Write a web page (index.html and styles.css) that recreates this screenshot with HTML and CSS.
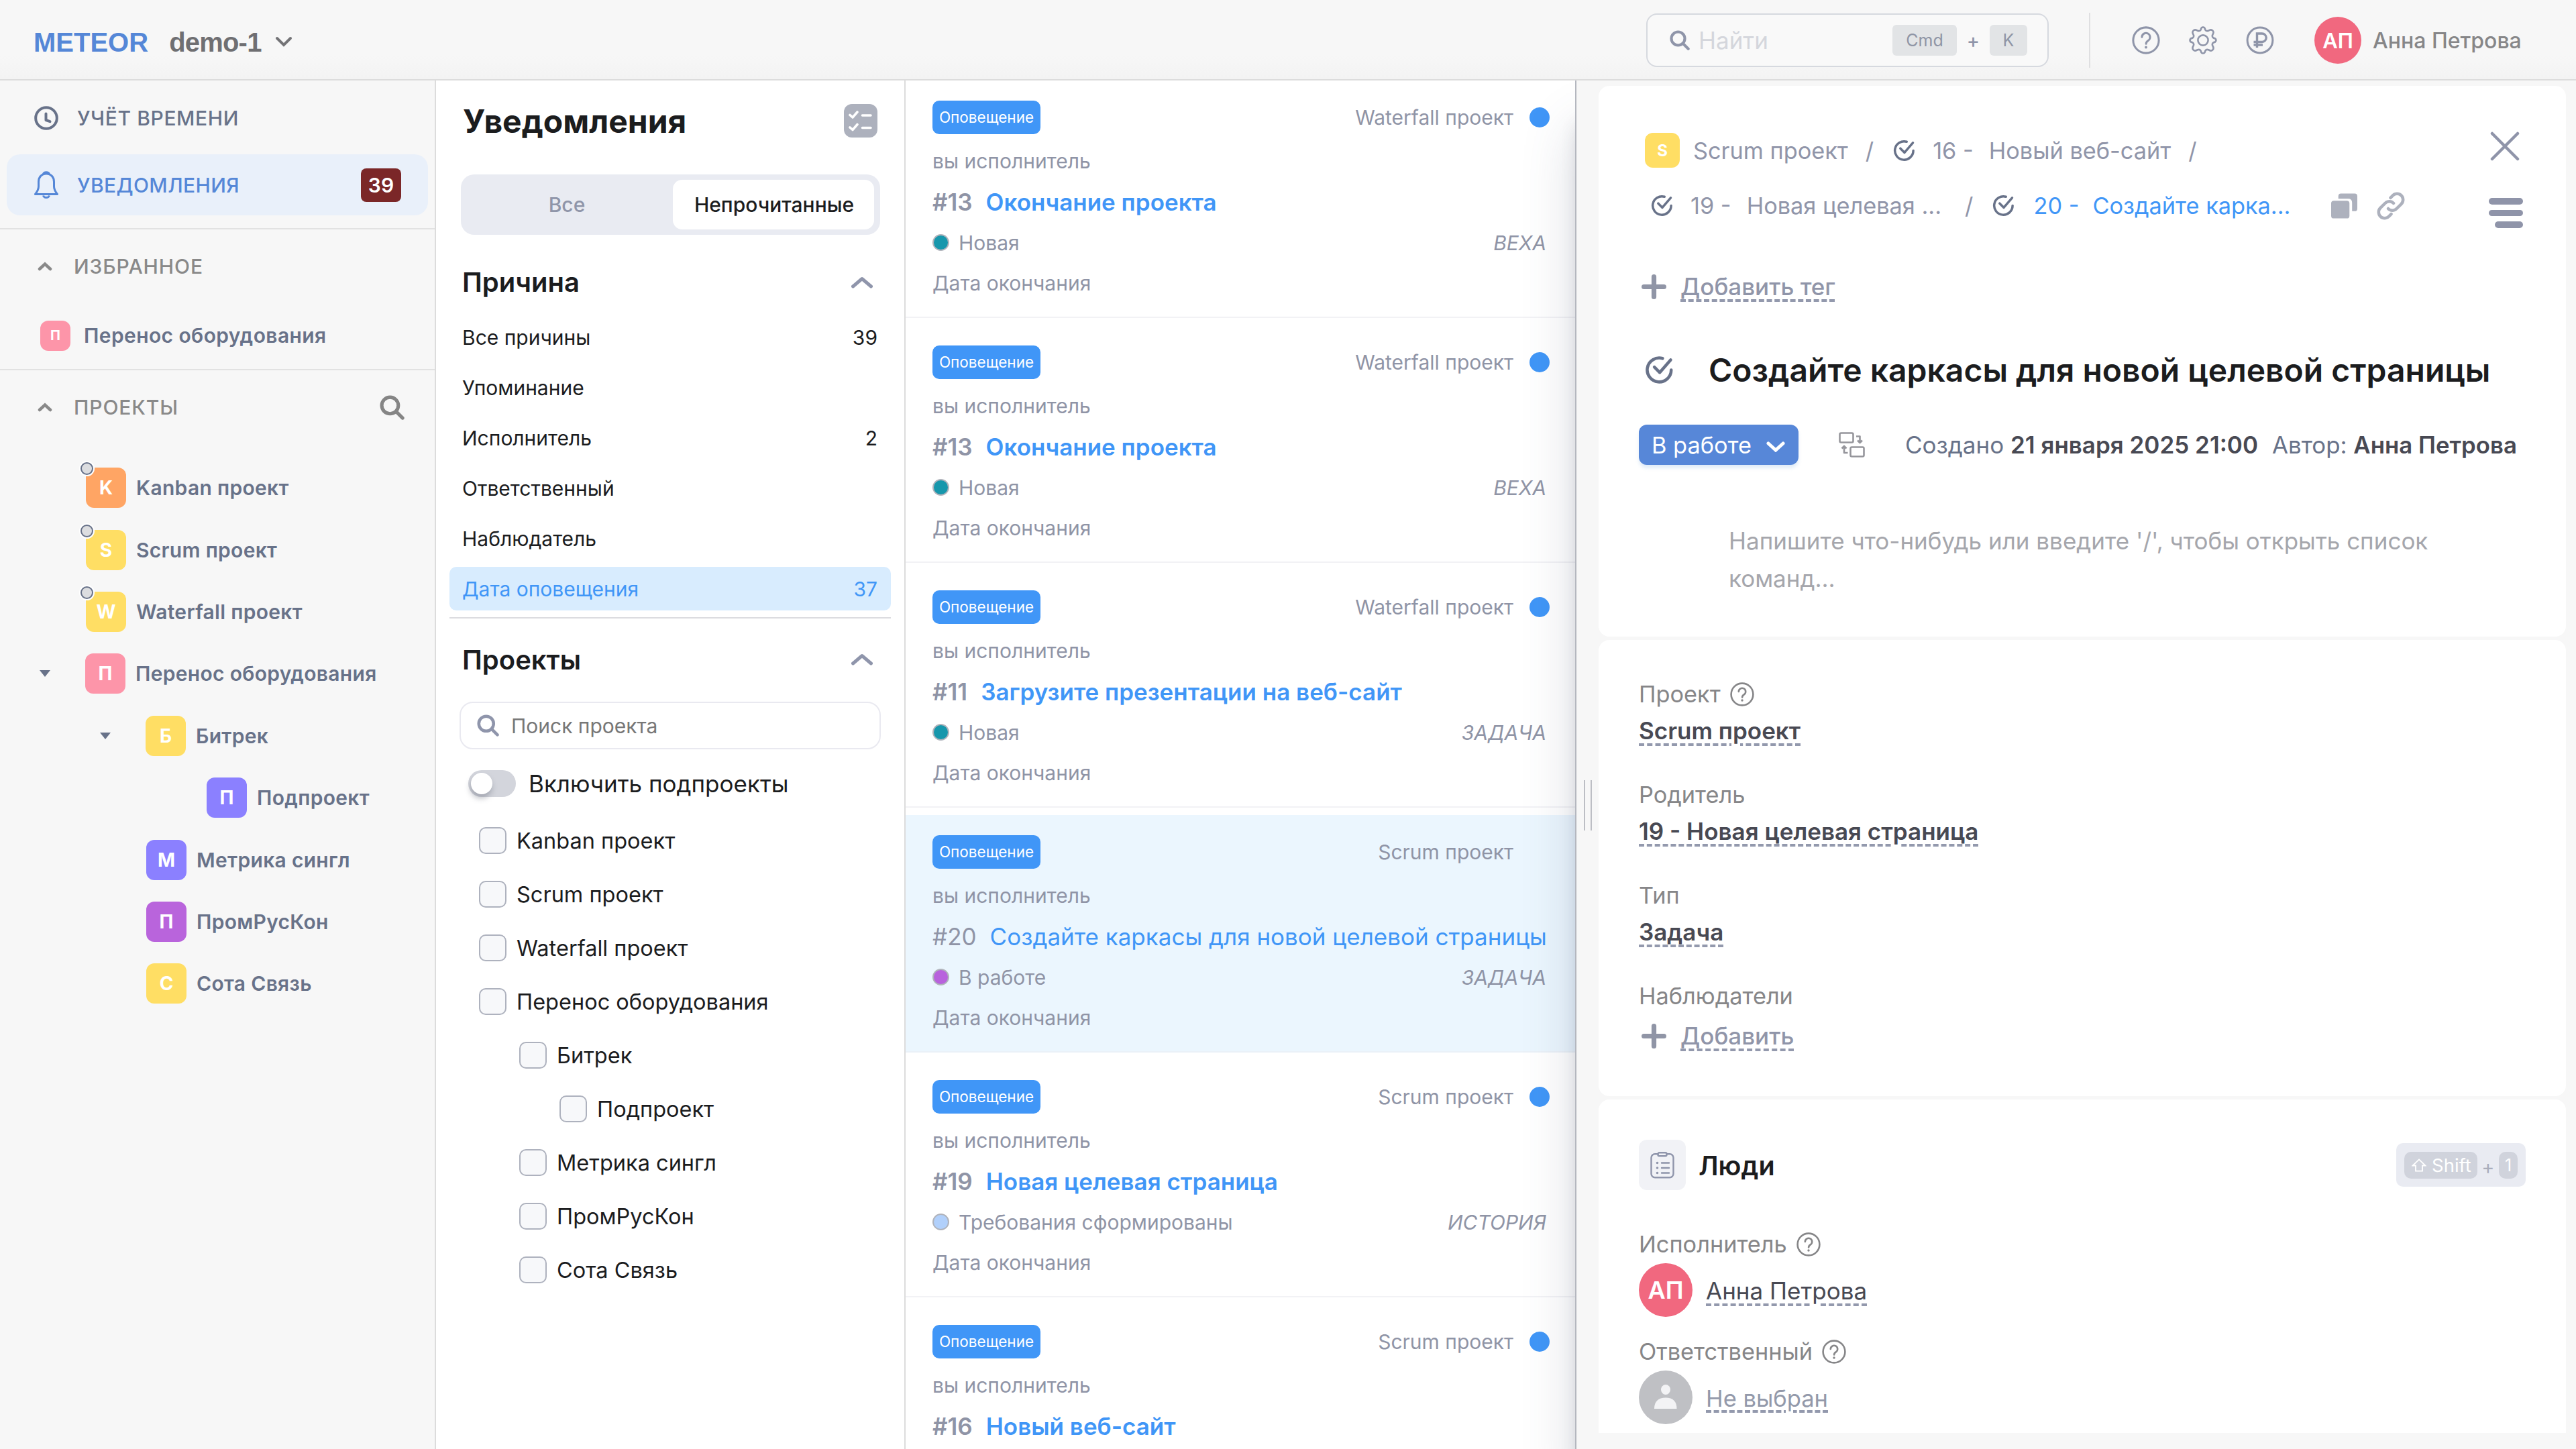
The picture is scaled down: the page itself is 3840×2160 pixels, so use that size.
FILE: index.html
```html
<!DOCTYPE html>
<html lang="ru">
<head>
<meta charset="utf-8">
<title>Уведомления — METEOR</title>
<link rel="stylesheet" href="styles.css">
</head>
<body>
<svg class="sprite" aria-hidden="true">
  <symbol id="i-task" viewBox="0 0 32 32"><g fill="none" stroke="currentColor" stroke-width="3.4" stroke-linecap="round" stroke-linejoin="round"><path d="M19.6 3.2A13.3 13.3 0 1 0 29.2 16"/><path d="M10.5 12.8l6 6L28.6 4.8"/></g></symbol>
  <symbol id="i-help" viewBox="0 0 36 36"><g fill="none" stroke="currentColor" stroke-width="2.6" stroke-linecap="round"><circle cx="18" cy="18" r="16.4"/><path d="M12.8 14a5.2 5.2 0 1 1 8 4.4c-1.9 1.2-2.7 2.1-2.7 4.1"/></g><circle cx="18" cy="27" r="1.7" fill="currentColor"/></symbol>
  <symbol id="i-search" viewBox="0 0 36 36"><g fill="none" stroke="currentColor" stroke-width="5" stroke-linecap="round"><circle cx="15" cy="15" r="12"/><path d="M24.2 24.2l9 9"/></g></symbol>
  <symbol id="i-up" viewBox="0 0 32 18"><path d="M2.5 15L16 3.5 29.5 15" fill="none" stroke="currentColor" stroke-width="5" stroke-linecap="round" stroke-linejoin="round"/></symbol>
  <symbol id="i-plus" viewBox="0 0 36 36"><path d="M18 3.5v29M3.5 18h29" stroke="currentColor" stroke-width="7" stroke-linecap="round"/></symbol>
</svg>

<header class="topbar">
  <div class="brand">METEOR</div>
  <div class="workspace">demo-1</div>
  <svg class="workspace-caret" viewBox="0 0 26 16"><path d="M3 3l10 10L23 3" fill="none" stroke="currentColor" stroke-width="4" stroke-linecap="round"/></svg>
  <div class="search">
    <svg class="search-icon"><use href="#i-search"/></svg>
    <span class="search-text">Найти</span>
    <kbd class="key key-cmd">Cmd</kbd><span class="key-plus">+</span><kbd class="key key-k">K</kbd>
  </div>
  <div class="topbar-sep"></div>
  <svg class="top-icon"><use href="#i-help"/></svg>
  <svg class="top-icon gear" viewBox="0 0 42 42"><g fill="none" stroke="currentColor" stroke-width="2.6" stroke-linejoin="round"><circle cx="21" cy="21" r="7.6"/><path d="M17.6 5.6Q18.2 1.5 21 1.5T24.4 5.6Q26 8 29 6.8Q33 4.2 35.4 6.6T35.2 13Q34 16 36.6 17.6Q40.5 18.2 40.5 21T36.6 24.4Q34 26 35.2 29Q37.800 33 35.400 35.400T29 35.200Q26 34 24.400 36.600Q23.800 40.500 21 40.500T17.600 36.600Q16 34 13 35.200Q9 37.800 6.600 35.400T6.800 29Q8 26 5.400 24.400Q1.500 23.800 1.500 21T5.400 17.600Q8 16 6.800 13Q4.200 9 6.600 6.600T13 6.800Q16 8 17.600 5.600Z"/></g></svg>
  <svg class="top-icon ruble" viewBox="0 0 42 42"><g fill="none" stroke="currentColor" stroke-width="3"><circle cx="21" cy="21" r="18.900"/><path d="M16.500 32V11h7.500a6 6 0 0 1 0 12.500H11.500M11.500 28H25" stroke-width="3.400"/></g></svg>
  <div class="avatar avatar-top">АП</div>
  <div class="user-name">Анна Петрова</div>
</header>

<div class="layout">
  <nav class="sidebar">
    <div class="nav-group">
      <a class="nav-item"><svg class="nav-icon" viewBox="0 0 36 36"><g fill="none" stroke="currentColor" stroke-width="4"><circle cx="18" cy="18" r="15.800"/><path d="M17.500 11.500v9.500l6 2.200" stroke-linecap="round" stroke-linejoin="round"/></g></svg><span>УЧЁТ ВРЕМЕНИ</span></a>
      <a class="nav-item active"><svg class="nav-icon bell" viewBox="0 0 36 42"><g fill="none" stroke="currentColor" stroke-width="3" stroke-linejoin="round"><path d="M18 4C11 4 6.500 9 6.500 16v7c0 4-1.500 7-5 11.500h33C31 30 29.500 27 29.500 23v-7C29.500 9 25 4 18 4z"/><path d="M13.500 4.500a4.600 3.600 0 0 1 9 0M13.500 36.500a4.600 3.800 0 0 0 9 0"/></g></svg><span class="nav-active-text">УВЕДОМЛЕНИЯ</span><b class="counter">39</b></a>
    </div>
    <div class="fav-group">
      <div class="side-head"><svg class="side-chev" viewBox="0 0 22 14"><path d="M3 11l8-7.500 8 7.500" fill="none" stroke="currentColor" stroke-width="4.500" stroke-linecap="round"/></svg>ИЗБРАННОЕ</div>
      <div class="fav"><i class="tile tile-s pink">П</i><span>Перенос оборудования</span></div>
    </div>
    <div class="side-head projects-head"><svg class="side-chev" viewBox="0 0 22 14"><path d="M3 11l8-7.500 8 7.500" fill="none" stroke="currentColor" stroke-width="4.500" stroke-linecap="round"/></svg>ПРОЕКТЫ<svg class="side-search"><use href="#i-search"/></svg></div>
    <ul class="tree">
      <li class="node"><i class="tile orange dot">K</i>Kanban проект</li>
      <li class="node"><i class="tile yellow dot">S</i>Scrum проект</li>
      <li class="node"><i class="tile yellow dot">W</i>Waterfall проект</li>
      <li class="node open"><i class="tile pink">П</i>Перенос оборудования</li>
      <li class="node l2 open"><i class="tile yellow">Б</i>Битрек</li>
      <li class="node l3"><i class="tile violet">П</i>Подпроект</li>
      <li class="node l2"><i class="tile violet">М</i>Метрика сингл</li>
      <li class="node l2"><i class="tile purple">П</i>ПромРусКон</li>
      <li class="node l2"><i class="tile yellow">С</i>Сота Связь</li>
    </ul>
  </nav>

  <aside class="filters">
    <div class="filters-head"><h1>Уведомления</h1><svg class="read-all" viewBox="0 0 50 50"><rect width="50" height="50" rx="12" fill="#adb1bd"/><path d="M9 16.500l4 3.500 7-8M9 35l4 3.500 7-8M27.500 17H40M27.500 35.500H40" fill="none" stroke="#fff" stroke-width="3.600" stroke-linecap="round" stroke-linejoin="round"/></svg></div>
    <div class="tabs"><span class="tab">Все</span><span class="tab on">Непрочитанные</span></div>
    <div class="group-head"><h2>Причина</h2><svg class="group-chev"><use href="#i-up"/></svg></div>
    <ul class="reasons">
      <li>Все причины<span>39</span></li>
      <li>Упоминание</li>
      <li>Исполнитель<span>2</span></li>
      <li>Ответственный</li>
      <li>Наблюдатель</li>
      <li class="on">Дата оповещения<span>37</span></li>
    </ul>
    <div class="group-head second"><h2>Проекты</h2><svg class="group-chev"><use href="#i-up"/></svg></div>
    <div class="project-search"><svg class="ps-icon"><use href="#i-search"/></svg><span>Поиск проекта</span></div>
    <div class="toggle-row"><i class="toggle"></i><span>Включить подпроекты</span></div>
    <ul class="checks">
      <li><i class="box"></i>Kanban проект</li>
      <li><i class="box"></i>Scrum проект</li>
      <li><i class="box"></i>Waterfall проект</li>
      <li><i class="box"></i>Перенос оборудования</li>
      <li class="c2"><i class="box"></i>Битрек</li>
      <li class="c3"><i class="box"></i>Подпроект</li>
      <li class="c2"><i class="box"></i>Метрика сингл</li>
      <li class="c2"><i class="box"></i>ПромРусКон</li>
      <li class="c2"><i class="box"></i>Сота Связь</li>
    </ul>
  </aside>

  <main class="feed">
    <article class="note">
      <div class="n-top"><b class="tag">Оповещение</b><span class="n-proj">Waterfall проект</span><i class="unread"></i></div>
      <div class="n-role">вы исполнитель</div>
      <div class="n-title"><span class="num">#13</span><a>Окончание проекта</a></div>
      <div class="n-status"><i class="st teal"></i>Новая<em>ВЕХА</em></div>
      <div class="n-date">Дата окончания</div>
    </article>
    <article class="note">
      <div class="n-top"><b class="tag">Оповещение</b><span class="n-proj">Waterfall проект</span><i class="unread"></i></div>
      <div class="n-role">вы исполнитель</div>
      <div class="n-title"><span class="num">#13</span><a>Окончание проекта</a></div>
      <div class="n-status"><i class="st teal"></i>Новая<em>ВЕХА</em></div>
      <div class="n-date">Дата окончания</div>
    </article>
    <article class="note">
      <div class="n-top"><b class="tag">Оповещение</b><span class="n-proj">Waterfall проект</span><i class="unread"></i></div>
      <div class="n-role">вы исполнитель</div>
      <div class="n-title"><span class="num">#11</span><a>Загрузите презентации на веб-сайт</a></div>
      <div class="n-status"><i class="st teal"></i>Новая<em>ЗАДАЧА</em></div>
      <div class="n-date">Дата окончания</div>
    </article>
    <article class="note selected">
      <div class="n-top"><b class="tag">Оповещение</b><span class="n-proj">Scrum проект</span><i class="unread"></i></div>
      <div class="n-role">вы исполнитель</div>
      <div class="n-title"><span class="num">#20</span><a>Создайте каркасы для новой целевой страницы</a></div>
      <div class="n-status"><i class="st purple-st"></i>В работе<em>ЗАДАЧА</em></div>
      <div class="n-date">Дата окончания</div>
    </article>
    <article class="note">
      <div class="n-top"><b class="tag">Оповещение</b><span class="n-proj">Scrum проект</span><i class="unread"></i></div>
      <div class="n-role">вы исполнитель</div>
      <div class="n-title"><span class="num">#19</span><a>Новая целевая страница</a></div>
      <div class="n-status"><i class="st sky"></i>Требования сформированы<em>ИСТОРИЯ</em></div>
      <div class="n-date">Дата окончания</div>
    </article>
    <article class="note">
      <div class="n-top"><b class="tag">Оповещение</b><span class="n-proj">Scrum проект</span><i class="unread"></i></div>
      <div class="n-role">вы исполнитель</div>
      <div class="n-title"><span class="num">#16</span><a>Новый веб-сайт</a></div>
    </article>
  </main>

  <section class="detail">
    <div class="grip"><i></i></div>
    <div class="cards">
      <div class="card summary">
        <div class="summary-top">
          <div class="crumbs">
            <div class="crumb-row"><i class="tile tile-c yellow">S</i><span class="cr-name">Scrum проект</span><span class="slash">/</span><svg class="task"><use href="#i-task"/></svg><span class="cr-id">16 -</span><span class="cr-name2">Новый веб-сайт</span><span class="slash">/</span></div>
            <div class="crumb-row shifted"><svg class="task"><use href="#i-task"/></svg><span class="cr-id">19 -</span><span class="cr-name2">Новая целевая ...</span><span class="slash wide">/</span><svg class="task"><use href="#i-task"/></svg><span class="cr-id blue current">20 -</span><span class="cr-name2 blue">Создайте карка...</span>
              <svg class="copy" viewBox="0 0 40 38"><path d="M11 8V4q0-4 4-4h21q4 0 4 4v19q0 4-4 4h-4V14q0-6-6-6z"/><rect x="0" y="11" width="28" height="27" rx="4"/></svg>
              <svg class="link" viewBox="0 0 24 24"><g fill="none" stroke="currentColor" stroke-width="2.600" stroke-linecap="round"><path d="M9.700 14.300a5 5 0 0 0 7.200 0l4-4a5.050 5.050 0 0 0-7.200-7.200l-2 2"/><path d="M14.300 9.700a5 5 0 0 0-7.200 0l-4 4a5.050 5.050 0 0 0 7.200 7.200l2-2"/></g></svg>
            </div>
          </div>
          <div class="actions">
            <svg class="close" viewBox="0 0 44 44"><path d="M3 3l38 38M41 3L3 41" stroke="currentColor" stroke-width="4.500" stroke-linecap="round"/></svg>
            <div class="burger"><i></i><i></i><i class="short"></i></div>
          </div>
        </div>
        <div class="add tag-add"><svg class="plus"><use href="#i-plus"/></svg><span class="dash">Добавить тег</span></div>
        <div class="title-row"><svg class="title-task"><use href="#i-task"/></svg><h3>Создайте каркасы для новой целевой страницы</h3></div>
        <div class="status-row">
          <button class="status-btn">В работе<svg viewBox="0 0 28 16"><path d="M3 3l11 10L25 3" fill="none" stroke="#fff" stroke-width="5" stroke-linecap="round"/></svg></button>
          <svg class="flow" viewBox="0 0 40 38"><g fill="none" stroke="currentColor" stroke-width="2.600" stroke-linejoin="round"><rect x="1.500" y="1.500" width="20" height="14" rx="2"/><rect x="17.500" y="22.500" width="20" height="14" rx="2"/><path d="M26 6.500h5.500V15M28 12.500l3.500 3.500 3.500-3.500M13.500 31H8v-8.500M4.500 24.500L8 21l3.500 3.500"/></g></svg>
          <span class="meta">Создано <b>21 января 2025 21:00</b></span><span class="meta author">Автор: <b>Анна Петрова</b></span>
        </div>
        <p class="editor">Напишите что-нибудь или введите '/', чтобы открыть список команд...</p>
      </div>

      <div class="card fields">
        <div class="field"><div class="label">Проект<svg class="help"><use href="#i-help"/></svg></div><div class="value"><span class="dash">Scrum проект</span></div></div>
        <div class="field"><div class="label">Родитель</div><div class="value"><span class="dash">19 - Новая целевая страница</span></div></div>
        <div class="field"><div class="label">Тип</div><div class="value"><span class="dash">Задача</span></div></div>
        <div class="field"><div class="label">Наблюдатели</div><div class="add watch-add"><svg class="plus"><use href="#i-plus"/></svg><span class="dash">Добавить</span></div></div>
      </div>

      <div class="card people">
        <div class="people-head">
          <div class="clip"><svg viewBox="0 0 36 40"><g fill="none" stroke="currentColor" stroke-width="2.400" stroke-linecap="round" stroke-linejoin="round"><path d="M11.500 3.200H7a5.500 5.500 0 0 0-5.500 5.500v24A5.500 5.500 0 0 0 7 38.200h22a5.500 5.500 0 0 0 5.500-5.500v-24A5.500 5.500 0 0 0 29 3.200h-4.500"/><rect x="11.500" y="1.200" width="13" height="5" rx="2"/><path d="M17 16.500h11M17 24h11M17 31.500h11"/></g><g fill="currentColor"><circle cx="10.500" cy="16.500" r="1.800"/><circle cx="10.500" cy="24" r="1.800"/><circle cx="10.500" cy="31.500" r="1.800"/></g></svg></div>
          <h4>Люди</h4>
          <div class="hotkey"><kbd class="hk"><svg viewBox="0 0 22 20"><path d="M11 1.400L20.500 10.500H16V18.600H6V10.500H1.500z" fill="none" stroke="#fff" stroke-width="1.800"/></svg>Shift</kbd><span>+</span><kbd class="hk one">1</kbd></div>
        </div>
        <div class="label p-label">Исполнитель<svg class="help"><use href="#i-help"/></svg></div>
        <div class="person"><div class="avatar">АП</div><span class="dash">Анна Петрова</span></div>
        <div class="label p-label p-label2">Ответственный<svg class="help"><use href="#i-help"/></svg></div>
        <div class="person empty"><div class="avatar none"><svg viewBox="0 0 34 38"><ellipse cx="17" cy="7.500" rx="7" ry="7.500"/><path d="M0 36C0 25 6 19.500 17 19.500S33.500 25 33.500 36z"/></svg></div><span class="dash">Не выбран</span></div>
      </div>
    </div>
  </section>
</div>
</body>
</html>
```
FILE: styles.css
```css
* { box-sizing: border-box; }
html, body { margin: 0; }
body {
  width: 3840px; height: 2160px; overflow: hidden;
  display: flex; flex-direction: column;
  background: #f7f7f7; color: #1b1c1e;
  font-family: Inter, "Liberation Sans", sans-serif; font-size: 30px;
}
h1, h2, h3, h4, p, ul { margin: 0; padding: 0; }
h1, h2, h3, h4 { font-weight: 600; }
li { list-style: none; }
i, kbd { font-style: normal; font-family: inherit; }
svg { display: block; flex: none; }
.sprite { display: none; }
span, a, b, h1, h2, h3, h4 { white-space: nowrap; }

/* top bar */
.topbar {
  flex: none; height: 120px; position: relative; z-index: 3;
  display: flex; align-items: center; padding: 2px 0 0 50px;
  background: linear-gradient(#f7f7f7 70%, #f3f3f3);
  border-bottom: 2px solid #dcdcdc;
}
.brand, .workspace { font: 700 40px/60px "Liberation Sans", sans-serif; color: #5587d7; padding-top: 6px; }
.workspace { color: #6f6f72; margin-left: 31px; letter-spacing: -0.8px; }
.workspace-caret { width: 26px; height: 16px; margin-left: 20px; margin-top: 3px; color: #737376; }
.search {
  width: 600px; height: 80px; margin-left: auto; padding: 0 30px 0 33px;
  display: flex; align-items: center;
  border: 2px solid #d6d9df; border-radius: 16px; background: #f9f9f9;
}
.search-icon { width: 30px; height: 30px; color: #8f95a9; }
.search-text { margin-left: 13px; font-size: 35px; color: #d4d6dc; }
.key { height: 46px; line-height: 46px; text-align: center; border-radius: 6px; background: #e2e4e6; color: #8f95a5; font-size: 25px; }
.key-cmd { width: 96px; margin-left: auto; }
.key-k { width: 56px; }
.key-plus { width: 49px; text-align: center; font-size: 29px; font-weight: 500; color: #8f95a9; }
.topbar-sep { width: 2px; height: 82px; margin: 0 62px 0 60px; background: #dfdfe1; }
.top-icon { width: 42px; height: 42px; margin-right: 43px; color: #8f95a9; }
.avatar {
  width: 80px; height: 80px; border-radius: 50%; flex: none;
  display: flex; align-items: center; justify-content: center;
  background: #f1687f; color: #fff; font-weight: 600; font-size: 36px;
}
.avatar-top { width: 70px; height: 70px; font-size: 31px; margin-left: 17px; }
.user-name { width: 303px; margin-left: 17px; font-size: 32px; font-weight: 500; color: #868688; }

.layout { flex: 1; min-height: 0; display: flex; }

/* sidebar */
.sidebar { width: 650px; flex: none; border-right: 2px solid #dcdcdc; color: #687289; }
.nav-group { height: 222px; padding: 10px 10px 0; border-bottom: 2px solid #e2e2e2; display: flex; flex-direction: column; gap: 9px; }
.nav-item { height: 91px; display: flex; align-items: center; padding: 0 40px 0 41px; border-radius: 20px; font-weight: 500; letter-spacing: .6px; }
.nav-icon { width: 36px; height: 36px; margin-right: 28px; }
.nav-icon.bell { height: 42px; }
.nav-item.active { background: #e9f0fa; color: #5587d7; letter-spacing: .4px; }
.counter { width: 60px; height: 50px; margin-left: auto; border-radius: 8px; background: #7b2728; color: #fff; font-weight: 600; line-height: 50px; text-align: center; letter-spacing: 0; }
.fav-group { height: 210px; border-bottom: 2px solid #e2e2e2; }
.side-head { height: 110px; display: flex; align-items: center; padding-left: 56px; color: #898989; font-weight: 500; letter-spacing: .9px; }
.side-chev { width: 22px; height: 14px; margin-right: 32px; }
.fav { height: 96px; display: flex; align-items: center; padding-left: 60px; font-weight: 600; letter-spacing: .4px; }
.tile { width: 60px; height: 60px; flex: none; position: relative; display: flex; align-items: center; justify-content: center; border-radius: 12px; color: #fff; font-weight: 700; font-size: 28px; letter-spacing: 0; margin-right: 15px; }
.tile-s { width: 45px; height: 45px; font-size: 20px; margin-right: 20px; }
.tile-c { width: 52px; height: 52px; font-size: 24px; margin-right: 20px; }
.pink { background: #fd95a9; }
.orange { background: #ffa564; }
.yellow { background: #ffde64; }
.violet { background: #8b80ff; }
.purple { background: #b964dc; }
.projects-head { height: 110px; padding-right: 45px; }
.side-search { width: 37px; height: 37px; margin-left: auto; color: #858585; }
.tree { padding-top: 19px; }
.node { height: 92.400px; display: flex; align-items: center; position: relative; padding-left: 128px; font-weight: 600; letter-spacing: .3px; }
.l2 { padding-left: 218px; }
.l3 { padding-left: 308px; }
.node.open::before { content: ""; width: 0; margin: 0 52px 0 -69px; border: 8.500px solid transparent; border-top: 10px solid #687289; border-bottom: 0; }
.tile.dot::before { content: ""; position: absolute; left: -8px; top: -8px; width: 15px; height: 15px; border-radius: 50%; border: 2px solid #687289; background: #dcdde0; box-shadow: 0 0 0 2px #fff; }

/* filters */
.filters { width: 700px; flex: none; background: #fff; border-right: 2px solid #dcdcdc; padding: 0 20px; }
.filters-head { height: 120px; padding: 0 20px 0 20px; display: flex; align-items: center; justify-content: space-between; }
h1 { font-size: 48px; font-weight: 700; }
.read-all { width: 50px; height: 50px; }
.tabs { height: 90px; margin: 20px 16px 0; padding: 8px; display: flex; border-radius: 20px; background: #e9ebf2; margin-left: 17px; }
.tab { flex: 1; display: flex; align-items: center; justify-content: center; font-weight: 500; color: #8f95a9; padding-right: 8px; }
.tab.on { flex: none; width: 300px; padding: 0 0 0 2px; border-radius: 14px; background: #fff; color: #1b1c1e; margin-right: 1px; }
.group-head { height: 115px; margin-top: 13px; padding: 0 27px 0 19px; display: flex; align-items: center; justify-content: space-between; }
h2 { font-size: 40px; }
.group-chev { width: 32px; height: 18px; color: #8f95ab; }
.reasons { margin-top: -8px; padding-bottom: 10px; border-bottom: 2px solid #dcdce0; }
.reasons li { height: 65px; margin-bottom: 10px; padding: 0 20px 0 19px; display: flex; align-items: center; justify-content: space-between; border-radius: 10px; }
.reasons li.on { background: #d8ecfe; color: #4096f7; margin-bottom: 0; }
.second { height: 122px; margin-top: 0; }
.project-search { height: 71px; margin: 2px 15px 0; display: flex; align-items: center; border: 2px solid #e9e9f0; border-radius: 20px; padding-left: 24px; color: #777; }
.ps-icon { width: 33px; height: 33px; margin-right: 18px; color: #8f95ab; }
.toggle-row { height: 80px; margin-top: 11px; padding-left: 28px; display: flex; align-items: center; font-size: 35px; }
.toggle { width: 71px; height: 40px; border-radius: 20px; background: #d3d5dc; margin-right: 19px; padding: 4px; }
.toggle::before { content: ""; display: block; width: 32px; height: 32px; border-radius: 50%; background: #fff; box-shadow: -1px 6px 8px rgba(90, 95, 110, .4); }
.checks { margin-top: 5px; font-size: 32.500px; }
.checks li { height: 80px; display: flex; align-items: center; padding-left: 44px; }
.checks .c2 { padding-left: 104px; }
.checks .c3 { padding-left: 164px; }
.box { width: 41px; height: 40px; margin-right: 15px; border: 2px solid #aeb2be; border-radius: 10px; background: #f7f8fa; }

/* feed */
.feed { width: 1000px; flex: none; background: #fff; color: #8f94a6; overflow: hidden; }
.note { height: 354px; margin-bottom: 11px; padding: 30px 46px 0 40px; border-bottom: 2px solid #f2f2f5; }
.n-top { height: 50px; display: flex; align-items: center; }
.tag { width: 161px; height: 50px; line-height: 50px; text-align: center; border-radius: 10px; background: #4096f7; color: #fff; font-weight: 400; font-size: 22.500px; }
.n-proj { margin-left: auto; }
.unread { width: 30px; height: 30px; margin: 0 -6px 0 24px; border-radius: 50%; background: #4096f7; }
.n-role { height: 60px; line-height: 60px; margin-top: 10px; }
.n-title { height: 60px; line-height: 60px; display: flex; gap: 20px; font-size: 35px; font-weight: 600; margin-top: 1px; }
.n-title a { color: #4096f7; }
.n-status { height: 61px; display: flex; align-items: center; }
.st { width: 25px; height: 25px; margin-right: 14px; border: 2px solid #b0b3bb; border-radius: 50%; }
.n-status em { margin-left: auto; margin-right: -1px; }
.n-date { height: 60px; line-height: 60px; }
.teal { background: #1797ac; }
.purple-st { background: #b862dd; }
.sky { background: #b1d0fb; }
.selected { background: #ebf6fe; border-bottom-color: #eaf1f8; }
.selected .n-title { font-weight: 400; }
.selected .unread { visibility: hidden; }

/* detail panel */
.detail {
  flex: 1; min-width: 0; position: relative; z-index: 2; display: flex;
  background: #f7f7f7; margin-left: -2px; border-left: 2px solid #b4b7bf;
  box-shadow: 0 60px 25px -6px rgba(60, 64, 80, .2), 0 70px 75px rgba(70, 78, 110, .2);
}
.grip { width: 33px; flex: none; display: flex; align-items: center; justify-content: center; padding-top: 120px; }
.grip i { width: 12px; height: 75px; border: solid #bcbec4; border-width: 0 2px; }
.cards { width: 1442px; display: flex; flex-direction: column; gap: 5px; padding-top: 8px; color: #9095a9; }
.card { background: #fff; border-radius: 16px; padding: 0 60px; }

.summary { height: 821px; font-size: 34.300px; }
.summary-top { display: flex; padding-top: 55px; }
.crumbs { flex: 1; padding-left: 9px; }
.crumb-row { height: 82.500px; display: flex; align-items: center; white-space: pre; }
.crumb-row.shifted { padding-left: 9px; }
.slash { margin: 0 29px 0 26px; }
.slash.wide { margin-left: 35px; }
.task { width: 33px; height: 33px; margin-right: 26px; color: #687289; }
.cr-id { margin-right: 23px; }
.cr-id.current { margin: 0 20px 0 2px; }
.blue { color: #4096f7; }
.copy { width: 39px; height: 38px; margin-left: 61px; fill: #adb1bd; }
.link { width: 42px; height: 42px; margin-left: 29px; color: #adb1bd; }
.actions { width: 52px; margin-right: 4px; padding-top: 13px; color: #8f94a9; }
.close { width: 44px; height: 44px; margin-left: 3px; }
.burger { margin-top: 55px; display: flex; flex-direction: column; align-items: flex-end; gap: 8px; }
.burger i { width: 51px; height: 9.500px; border-radius: 5px; background: #8f94a9; }
.burger .short { width: 42px; }
.add { display: flex; align-items: center; font-size: 35px; font-weight: 500; }
.plus { width: 37px; height: 37px; margin: 0 21px 0 4px; color: #9095a6; }
.tag-add { height: 50px; margin-top: 54px; }
.dash { text-decoration: underline dashed #9399ad; text-decoration-thickness: 3.500px; text-underline-offset: 6px; }
.title-row { height: 70px; margin-top: 64px; display: flex; align-items: center; }
.title-task { width: 43px; height: 43px; margin: 0 52px 0 9px; color: #687289; }
h3 { font-size: 48px; color: #1b1c1e; }
.status-row { height: 60px; margin-top: 47px; display: flex; align-items: center; color: #687289; font-size: 35px; }
.status-btn { width: 238px; height: 60px; padding: 0 20px 0 19px; border: 0; border-radius: 12px; background: #5787d8; color: #fff; font: 400 34.300px Inter, "Liberation Sans", sans-serif; display: flex; align-items: center; justify-content: space-between; box-shadow: 0 5px 5px rgba(190, 215, 240, .45); }
.status-btn svg { width: 28px; height: 16px; margin-top: 6px; }
.flow { width: 40px; height: 38px; margin: 0 59px 0 60px; color: #96969c; }
.meta b { color: #484953; font-weight: 600; }
.author { margin-left: 21px; font-size: 34.800px; }
.editor { width: 1080px; margin: 85px 0 0 134px; font-size: 35px; line-height: 56px; color: #a5a6ac; }

.fields { height: 680px; padding-top: 53px; }
.field { height: 150px; }
.label { height: 55px; display: flex; align-items: center; font-size: 34.300px; color: #868688; }
.value { height: 55px; line-height: 55px; font-size: 35px; font-weight: 600; color: #484953; }
.help { width: 36px; height: 36px; margin-left: 14px; }
.watch-add { height: 64px; }

.people { height: 497px; border-radius: 16px 16px 0 0; padding-top: 60px; }
.people-head { height: 75px; display: flex; align-items: center; }
.clip { width: 70px; height: 75px; border-radius: 12px; background: #f1f2f6; color: #8f95ab; display: flex; align-items: center; justify-content: center; }
.clip svg { width: 36px; height: 40px; }
h4 { margin-left: 19px; padding-top: 2px; font-size: 39.500px; color: #1b1c1e; }
.hotkey { width: 193px; height: 65px; margin-left: auto; padding: 0 12px; border-radius: 10px; background: #e9ebf2; display: flex; align-items: center; justify-content: space-between; font-size: 29px; color: #a9adba; }
.hotkey span { padding-top: 5px; }
.hk { height: 40px; padding: 0 9px 0 11px; border-radius: 10px; background: #d0d3dc; color: #fff; font-size: 27.500px; display: flex; align-items: center; }
.hk svg { width: 22px; height: 20px; margin-right: 8px; }
.hk.one { width: 28px; padding: 0; justify-content: center; font-size: 25px; }
.p-label { margin-top: 53px; }
.person { height: 80px; margin-top: 1px; display: flex; align-items: center; gap: 20px; font-size: 35px; color: #484953; }
.p-label2 { margin-top: 24px; }
.person .dash { padding-top: 2px; }
.empty { color: #9399aa; font-size: 34.500px; }
.avatar.none { background: #bfc0c4; }
.none svg { width: 34px; height: 38px; fill: #f3f3f5; }
```
